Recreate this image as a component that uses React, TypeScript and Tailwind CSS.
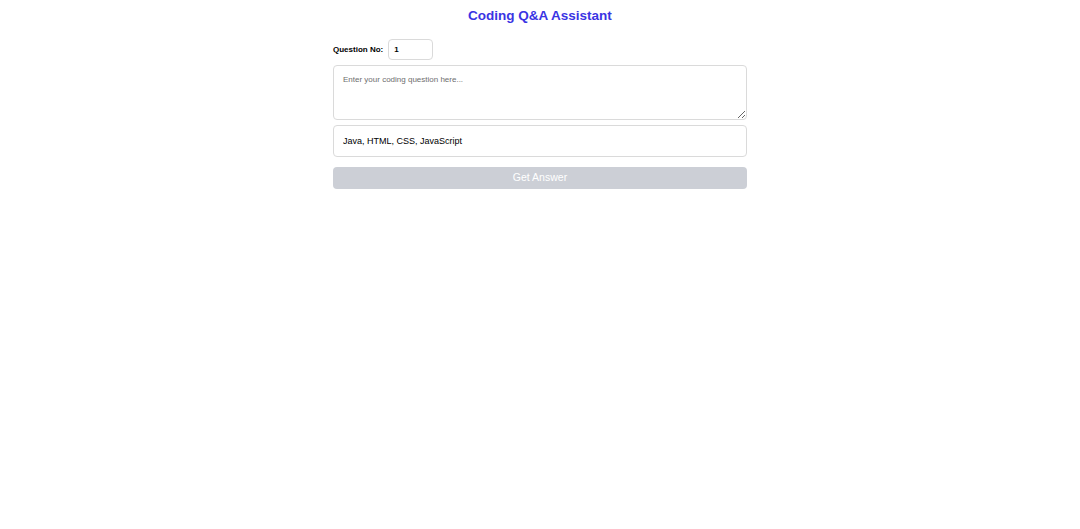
export default function App() {
  return (
    <div className="min-h-screen bg-white font-['Liberation_Sans',Arial,sans-serif]">
      <div className="mx-auto w-[414px] pt-[7px]">
        <h1 className="text-center text-[13.5px] font-bold leading-[18px] text-[#3a34e3]">
          Coding Q&amp;A Assistant
        </h1>
        <div className="mt-[14px] flex items-center gap-[5px]">
          <label className="text-[8px] font-bold text-black">Question No:</label>
          <input
            type="number"
            defaultValue={1}
            className="h-[21px] w-[45px] rounded-[4px] border border-[#dadada] px-[5px] text-[8px] font-bold text-black outline-none [appearance:textfield]"
          />
        </div>
        <textarea
          placeholder="Enter your coding question here..."
          className="mt-[5px] block h-[55px] w-full rounded-[4px] border border-[#dadada] px-[9px] pt-[8px] pb-[8px] text-[8px] text-black outline-none placeholder:text-[#6e6e6e]"
        />
        <input
          type="text"
          defaultValue="Java, HTML, CSS, JavaScript"
          className="mt-[5px] block h-[32px] w-full rounded-[4px] border border-[#dadada] px-[9px] text-[9px] text-black outline-none"
        />
        <button
          disabled
          className="mt-[10px] block h-[22px] w-full rounded-[4px] bg-[#cccfd6] text-[10.5px] text-white"
        >
          Get Answer
        </button>
      </div>
    </div>
  );
}
